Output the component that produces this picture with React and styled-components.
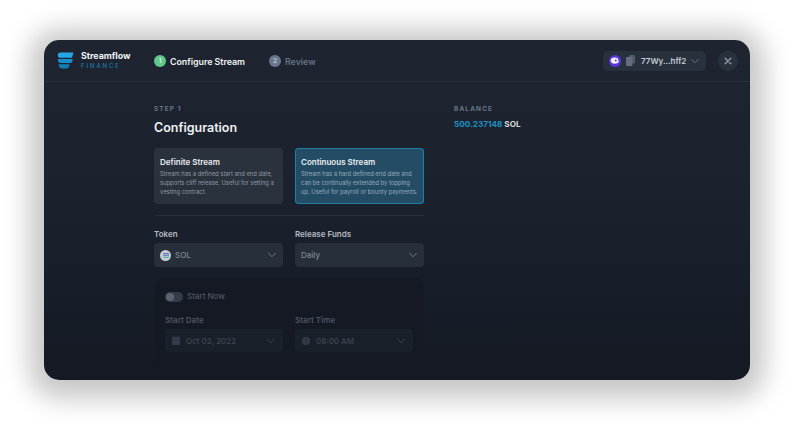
import styled, { createGlobalStyle } from "styled-components";

const GlobalStyle = createGlobalStyle`
  html, body {
    margin: 0;
    padding: 0;
    background: #fff;
    font-family: Inter, "Liberation Sans", sans-serif;
  }
  * { box-sizing: border-box; }
`;

const Page = styled.div`
  width: 794px;
  height: 428px;
  padding: 40px 44px 48px;
  overflow: hidden;
`;
const Window = styled.div`
  width: 706px;
  height: 340px;
  border-radius: 15px;
  overflow: hidden;
  background: linear-gradient(180deg, #1e2530 0%, #1b222d 45%, #141924 100%);
  box-shadow: 0 4px 26px 15px rgba(0, 0, 0, 0.22);
`;
const Header = styled.header`
  height: 42px;
  padding: 0 12px 0 13px;
  display: flex;
  align-items: center;
  border-bottom: 1px solid #262f3c;
`;
const Brand = styled.div`
  display: flex;
  align-items: center;
  gap: 7px;
  width: 97px;
`;
const BrandText = styled.div`
  display: flex;
  flex-direction: column;
`;
const BrandName = styled.span`
  color: #f1f3f6;
  font-size: 8.8px;
  line-height: 10px;
  font-weight: 700;
`;
const BrandSub = styled.span`
  color: #1b7cae;
  font-size: 6px;
  line-height: 9px;
  letter-spacing: 1.9px;
  font-weight: 500;
`;
const Step = styled.div`
  display: flex;
  align-items: center;
  gap: 4px;
  margin-right: 24px;
  padding-top: 1px;
  font-size: 8.8px;
  font-weight: 600;
  color: ${(p) => (p.$active ? "#f0f2f5" : "#667285")};
`;
const StepDot = styled.span`
  width: 12px;
  height: 12px;
  border-radius: 50%;
  display: flex;
  align-items: center;
  justify-content: center;
  font-size: 6.5px;
  font-weight: 600;
  color: ${(p) => (p.$active ? "#d8f5e2" : "#c0c8d3")};
  background: ${(p) => (p.$active ? "#5fc88a" : "#69768d")};
`;
const HeaderRight = styled.div`
  margin-left: auto;
  display: flex;
  align-items: center;
  gap: 12px;
`;
const Wallet = styled.div`
  width: 103px;
  height: 20px;
  padding: 0 6px;
  border-radius: 5px;
  background: #28313e;
  display: flex;
  align-items: center;
  color: #c6cbd3;
  font-size: 8px;
  font-weight: 600;
`;
const WalletCopy = styled.span`
  margin-left: 5px;
  display: flex;
`;
const WalletText = styled.span`
  margin-left: 6px;
`;
const WalletChevron = styled.span`
  margin-left: auto;
  display: flex;
  color: #667386;
`;
const CloseButton = styled.div`
  width: 20px;
  height: 20px;
  border-radius: 50%;
  background: #28313e;
  display: flex;
  align-items: center;
  justify-content: center;
`;
const Body = styled.main`
  padding: 22px 0 0 110px;
  display: flex;
  gap: 30px;
`;
const Form = styled.section`
  width: 270px;
  display: flex;
  flex-direction: column;
`;
const Eyebrow = styled.div`
  color: #69768a;
  font-size: 6.5px;
  line-height: 10px;
  font-weight: 700;
  letter-spacing: 1.1px;
`;
const Title = styled.h1`
  margin: 6px 0 0;
  color: #eef0f3;
  font-size: 12.5px;
  line-height: 16px;
  font-weight: 600;
`;
const Cards = styled.div`
  margin-top: 12px;
  display: grid;
  grid-template-columns: 129px 129px;
  gap: 12px;
`;
const Card = styled.div`
  height: 56px;
  padding: 9px 5px 0 6px;
  border-radius: 4px;
  background: ${(p) => (p.$selected ? "#244c65" : "#2a323e")};
  box-shadow: ${(p) => (p.$selected ? "inset 0 0 0 1px #1f7fa8" : "none")};
`;
const CardTitle = styled.div`
  color: #e9ecf0;
  font-size: 8px;
  line-height: 10px;
  font-weight: 600;
  margin-bottom: 2px;
`;
const CardText = styled.div`
  color: ${(p) => (p.$selected ? "#94aaba" : "#8f98a3")};
  font-size: 5.85px;
  line-height: 9px;
  white-space: nowrap;
`;
const Divider = styled.hr`
  margin: 11px 0 0;
  border: 0;
  height: 1px;
  background: #262f3b;
`;
const Fields = styled.div`
  display: grid;
  grid-template-columns: ${(p) => p.$columns || "129px 129px"};
  gap: 12px;
  margin-top: ${(p) => p.$top || "13px"};
`;
const Field = styled.div`
  display: flex;
  flex-direction: column;
  gap: ${(p) => (p.$dim ? "4px" : "3px")};
`;
const Label = styled.label`
  color: ${(p) => (p.$dim ? "#4c5462" : "#b6bbc3")};
  font-size: 8px;
  line-height: ${(p) => (p.$dim ? "10px" : "11px")};
  font-weight: 600;
`;
const Select = styled.div`
  height: ${(p) => (p.$dim ? "23px" : "24px")};
  padding: 0 ${(p) => (p.$dim ? "7px" : "6px")};
  border-radius: 4px;
  background: ${(p) => (p.$dim ? "#1a202a" : "#272f3b")};
  color: ${(p) => (p.$dim ? "#3f4653" : "#7f8793")};
  display: flex;
  align-items: center;
  gap: ${(p) => (p.$dim ? "6px" : "4px")};
  font-size: 8px;
  font-weight: 500;
`;
const SelectChevron = styled.span`
  margin-left: auto;
  display: flex;
  color: ${(p) => (p.$dim ? "#3f4653" : "#717a88")};
`;
const TokenIcon = styled.span`
  width: 11px;
  height: 11px;
  border-radius: 50%;
  background: #c9ccd2;
  display: flex;
  align-items: center;
  justify-content: center;
`;
const Panel = styled.div`
  margin: 12px 0 0 1px;
  height: 88px;
  padding: 12px 10px 0 10px;
  border-radius: 7px;
  background: #141923;
`;
const ToggleRow = styled.div`
  display: flex;
  align-items: center;
  gap: 4px;
  color: #4f5663;
  font-size: 8px;
  line-height: 11px;
  font-weight: 500;
`;
const Toggle = styled.span`
  width: 18px;
  height: 10px;
  border-radius: 5px;
  background: #343c49;
  display: flex;
  align-items: center;
  padding-left: 1px;
`;
const ToggleKnob = styled.span`
  width: 8px;
  height: 8px;
  border-radius: 50%;
  background: #5d6470;
`;
const Balance = styled.aside`
  display: flex;
  flex-direction: column;
`;
const BalanceValue = styled.div`
  margin-top: 5px;
  font-size: 8.2px;
  line-height: 11px;
  font-weight: 700;
  color: #d5d8dd;
`;
const Amount = styled.span`
  color: #1c8fc4;
`;

const Logo = () => (
  <svg width="17" height="17" viewBox="0 0 17 17">
    <path d="M3.5 0.5H16.5L15 5.8H3.5A2.65 2.65 0 0 1 3.5 0.5z" fill="#22a8e6" />
    <path d="M0.8 7H14.5C15.6 7 16 8 15.5 9.2C15 10.4 14 11 13 11H3.5C2 11 0.8 9.5 0.8 7z" fill="#1a8fce" />
    <path d="M1.5 12.2H12.5C12.3 14.6 11 16.5 9.5 16.5H5C3 16.5 1.8 14.5 1.5 12.2z" fill="#137fba" />
  </svg>
);

const Chevron = ({ size = 10 }) => (
  <svg width={size} height={size} viewBox="0 0 10 10" fill="none" stroke="currentColor" strokeWidth="1" strokeLinecap="round">
    <path d="M1.5 3.2 5 6.7l3.5-3.5" />
  </svg>
);

const Avatar = () => (
  <svg width="12" height="12" viewBox="0 0 12 12">
    <circle cx="6" cy="6" r="6" fill="#5a34e0" />
    <ellipse cx="5.6" cy="5.6" rx="3.9" ry="3.1" fill="#f2effd" />
    <path d="M8 6.5h2.5L8 8.5z" fill="#f2effd" />
    <circle cx="6.8" cy="5.4" r="0.9" fill="#4a2cc0" />
  </svg>
);

const CopyIcon = () => (
  <svg width="9" height="11" viewBox="0 0 9 11">
    <rect x="3" y="0" width="6" height="8.5" rx="1" fill="#4f5a6b" />
    <rect x="0" y="2" width="6.5" height="9" rx="1" fill="#626e80" />
  </svg>
);

const CloseIcon = () => (
  <svg width="8" height="8" viewBox="0 0 8 8" fill="none" stroke="#8e99a8" strokeWidth="1.4" strokeLinecap="round">
    <path d="M1.2 1.2l5.6 5.6M6.8 1.2 1.2 6.8" />
  </svg>
);

const SolIcon = () => (
  <svg width="6" height="5" viewBox="0 0 6 5">
    <rect y="0" width="6" height="1.2" fill="#7d62c9" />
    <rect y="1.9" width="6" height="1.2" fill="#5a8fc4" />
    <rect y="3.8" width="6" height="1.2" fill="#4fc0a8" />
  </svg>
);

const CalendarIcon = () => (
  <svg width="8" height="9" viewBox="0 0 8 9">
    <rect x="0" y="1" width="8" height="8" rx="1" fill="#343b48" />
    <rect x="1.5" y="0" width="1" height="2" fill="#343b48" />
    <rect x="5.5" y="0" width="1" height="2" fill="#343b48" />
  </svg>
);

const ClockIcon = () => (
  <svg width="8" height="8" viewBox="0 0 8 8">
    <circle cx="4" cy="4" r="4" fill="#343b48" />
    <path d="M4 1.8V4l1.5 1" stroke="#1a202a" strokeWidth="0.8" fill="none" />
  </svg>
);

const App = () => (
  <Page>
    <GlobalStyle />
    <Window>
      <Header>
        <Brand>
          <Logo />
          <BrandText>
            <BrandName>Streamflow</BrandName>
            <BrandSub>FINANCE</BrandSub>
          </BrandText>
        </Brand>
        <Step $active>
          <StepDot $active>1</StepDot>
          Configure Stream
        </Step>
        <Step>
          <StepDot>2</StepDot>
          Review
        </Step>
        <HeaderRight>
          <Wallet>
            <Avatar />
            <WalletCopy>
              <CopyIcon />
            </WalletCopy>
            <WalletText>77Wy...hff2</WalletText>
            <WalletChevron>
              <Chevron />
            </WalletChevron>
          </Wallet>
          <CloseButton>
            <CloseIcon />
          </CloseButton>
        </HeaderRight>
      </Header>
      <Body>
        <Form>
          <Eyebrow>STEP 1</Eyebrow>
          <Title>Configuration</Title>
          <Cards>
            <Card>
              <CardTitle>Definite Stream</CardTitle>
              <CardText>Stream has a defined start and end date,</CardText>
              <CardText>supports cliff release. Useful for setting a</CardText>
              <CardText>vesting contract.</CardText>
            </Card>
            <Card $selected>
              <CardTitle>Continuous Stream</CardTitle>
              <CardText $selected>Stream has a hard defined end date and</CardText>
              <CardText $selected>can be continually extended by topping</CardText>
              <CardText $selected>up. Useful for payroll or bounty payments.</CardText>
            </Card>
          </Cards>
          <Divider />
          <Fields>
            <Field>
              <Label>Token</Label>
              <Select>
                <TokenIcon>
                  <SolIcon />
                </TokenIcon>
                SOL
                <SelectChevron>
                  <Chevron />
                </SelectChevron>
              </Select>
            </Field>
            <Field>
              <Label>Release Funds</Label>
              <Select>
                Daily
                <SelectChevron>
                  <Chevron />
                </SelectChevron>
              </Select>
            </Field>
          </Fields>
          <Panel>
            <ToggleRow>
              <Toggle>
                <ToggleKnob />
              </Toggle>
              Start Now
            </ToggleRow>
            <Fields $columns="118px 118px" $top="13px">
              <Field $dim>
                <Label $dim>Start Date</Label>
                <Select $dim>
                  <CalendarIcon />
                  Oct 02, 2022
                  <SelectChevron $dim>
                    <Chevron />
                  </SelectChevron>
                </Select>
              </Field>
              <Field $dim>
                <Label $dim>Start Time</Label>
                <Select $dim>
                  <ClockIcon />
                  08:00 AM
                  <SelectChevron $dim>
                    <Chevron />
                  </SelectChevron>
                </Select>
              </Field>
            </Fields>
          </Panel>
        </Form>
        <Balance>
          <Eyebrow>BALANCE</Eyebrow>
          <BalanceValue>
            <Amount>500.237148</Amount> SOL
          </BalanceValue>
        </Balance>
      </Body>
    </Window>
  </Page>
);

export default App;
